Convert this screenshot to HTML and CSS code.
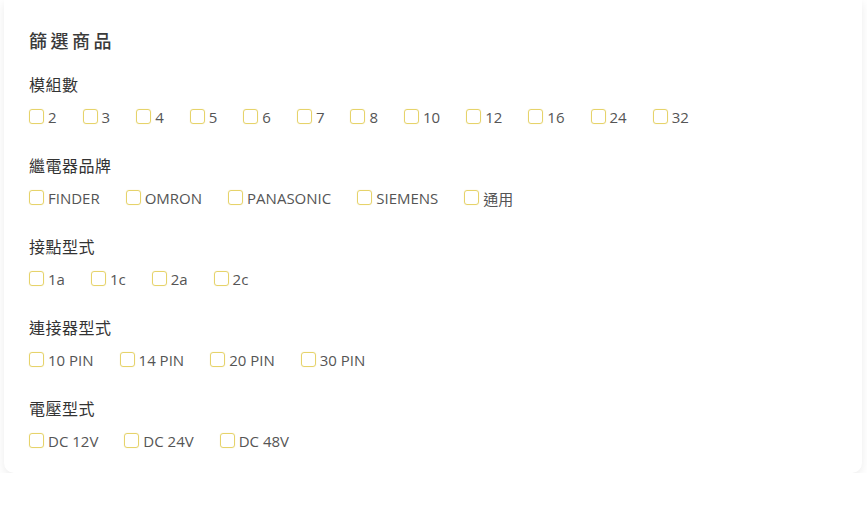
FILE: index.html
```html
<!DOCTYPE html>
<html lang="zh-Hant">

<head>
    <meta charset="UTF-8">
    <meta name="viewport" content="width=device-width, initial-scale=1.0">
    <title>篩選商品</title>
    <link rel="stylesheet" href="styles.css">
</head>

<body>

    <div class="filter-card">
        <div class="filter-title">篩選商品</div>

        <div class="filter-group">
            <div class="group-title">模組數</div>
            <div class="option-list">
                <label class="option"><span class="box"></span>2</label>
                <label class="option"><span class="box"></span>3</label>
                <label class="option"><span class="box"></span>4</label>
                <label class="option"><span class="box"></span>5</label>
                <label class="option"><span class="box"></span>6</label>
                <label class="option"><span class="box"></span>7</label>
                <label class="option"><span class="box"></span>8</label>
                <label class="option"><span class="box"></span>10</label>
                <label class="option"><span class="box"></span>12</label>
                <label class="option"><span class="box"></span>16</label>
                <label class="option"><span class="box"></span>24</label>
                <label class="option"><span class="box"></span>32</label>
            </div>
        </div>

        <div class="filter-group">
            <div class="group-title">繼電器品牌</div>
            <div class="option-list">
                <label class="option"><span class="box"></span>FINDER</label>
                <label class="option"><span class="box"></span>OMRON</label>
                <label class="option"><span class="box"></span>PANASONIC</label>
                <label class="option"><span class="box"></span>SIEMENS</label>
                <label class="option"><span class="box"></span>通用</label>
            </div>
        </div>

        <div class="filter-group">
            <div class="group-title">接點型式</div>
            <div class="option-list">
                <label class="option"><span class="box"></span>1a</label>
                <label class="option"><span class="box"></span>1c</label>
                <label class="option"><span class="box"></span>2a</label>
                <label class="option"><span class="box"></span>2c</label>
            </div>
        </div>

        <div class="filter-group">
            <div class="group-title">連接器型式</div>
            <div class="option-list">
                <label class="option"><span class="box"></span>10 PIN</label>
                <label class="option"><span class="box"></span>14 PIN</label>
                <label class="option"><span class="box"></span>20 PIN</label>
                <label class="option"><span class="box"></span>30 PIN</label>
            </div>
        </div>

        <div class="filter-group">
            <div class="group-title">電壓型式</div>
            <div class="option-list">
                <label class="option"><span class="box"></span>DC 12V</label>
                <label class="option"><span class="box"></span>DC 24V</label>
                <label class="option"><span class="box"></span>DC 48V</label>
            </div>
        </div>
    </div>

</body>

</html>
```

FILE: styles.css
```css
body {
    font-family: "Open Sans", "Noto Sans CJK TC", sans-serif;
    background-color: #ffffff;
    margin: 0;
    padding: 0 5px 0 4px;
}

.filter-card {
    background-color: #ffffff;
    border-radius: 0 0 10px 10px;
    padding: 28px 20px 22px 25px;
    box-shadow: 0 3px 10px rgba(0, 0, 0, 0.08);
}

.filter-title {
    font-family: "Noto Sans CJK TC", sans-serif;
    font-size: 18px;
    font-weight: 500;
    line-height: 24px;
    letter-spacing: 3.5px;
    color: #3a3a3a;
    margin-bottom: 20px;
}

.filter-group {
    margin-bottom: 26px;
}

.filter-group:last-child {
    margin-bottom: 0;
}

.group-title {
    font-family: "Noto Sans CJK TC", sans-serif;
    font-size: 16px;
    font-weight: 400;
    line-height: 24px;
    letter-spacing: 0.5px;
    color: #333333;
    margin-bottom: 11px;
}

.option-list {
    display: flex;
    flex-wrap: wrap;
    gap: 0 26px;
}

.option {
    display: flex;
    align-items: center;
    height: 20px;
    font-size: 15px;
    color: #555555;
    cursor: pointer;
}

.box {
    width: 15px;
    height: 15px;
    box-sizing: border-box;
    border: 1.5px solid #e6d36a;
    border-radius: 3px;
    box-shadow: 0 0 1px rgba(230, 211, 106, 0.6);
    margin-right: 4px;
    margin-top: -1px;
}
```
